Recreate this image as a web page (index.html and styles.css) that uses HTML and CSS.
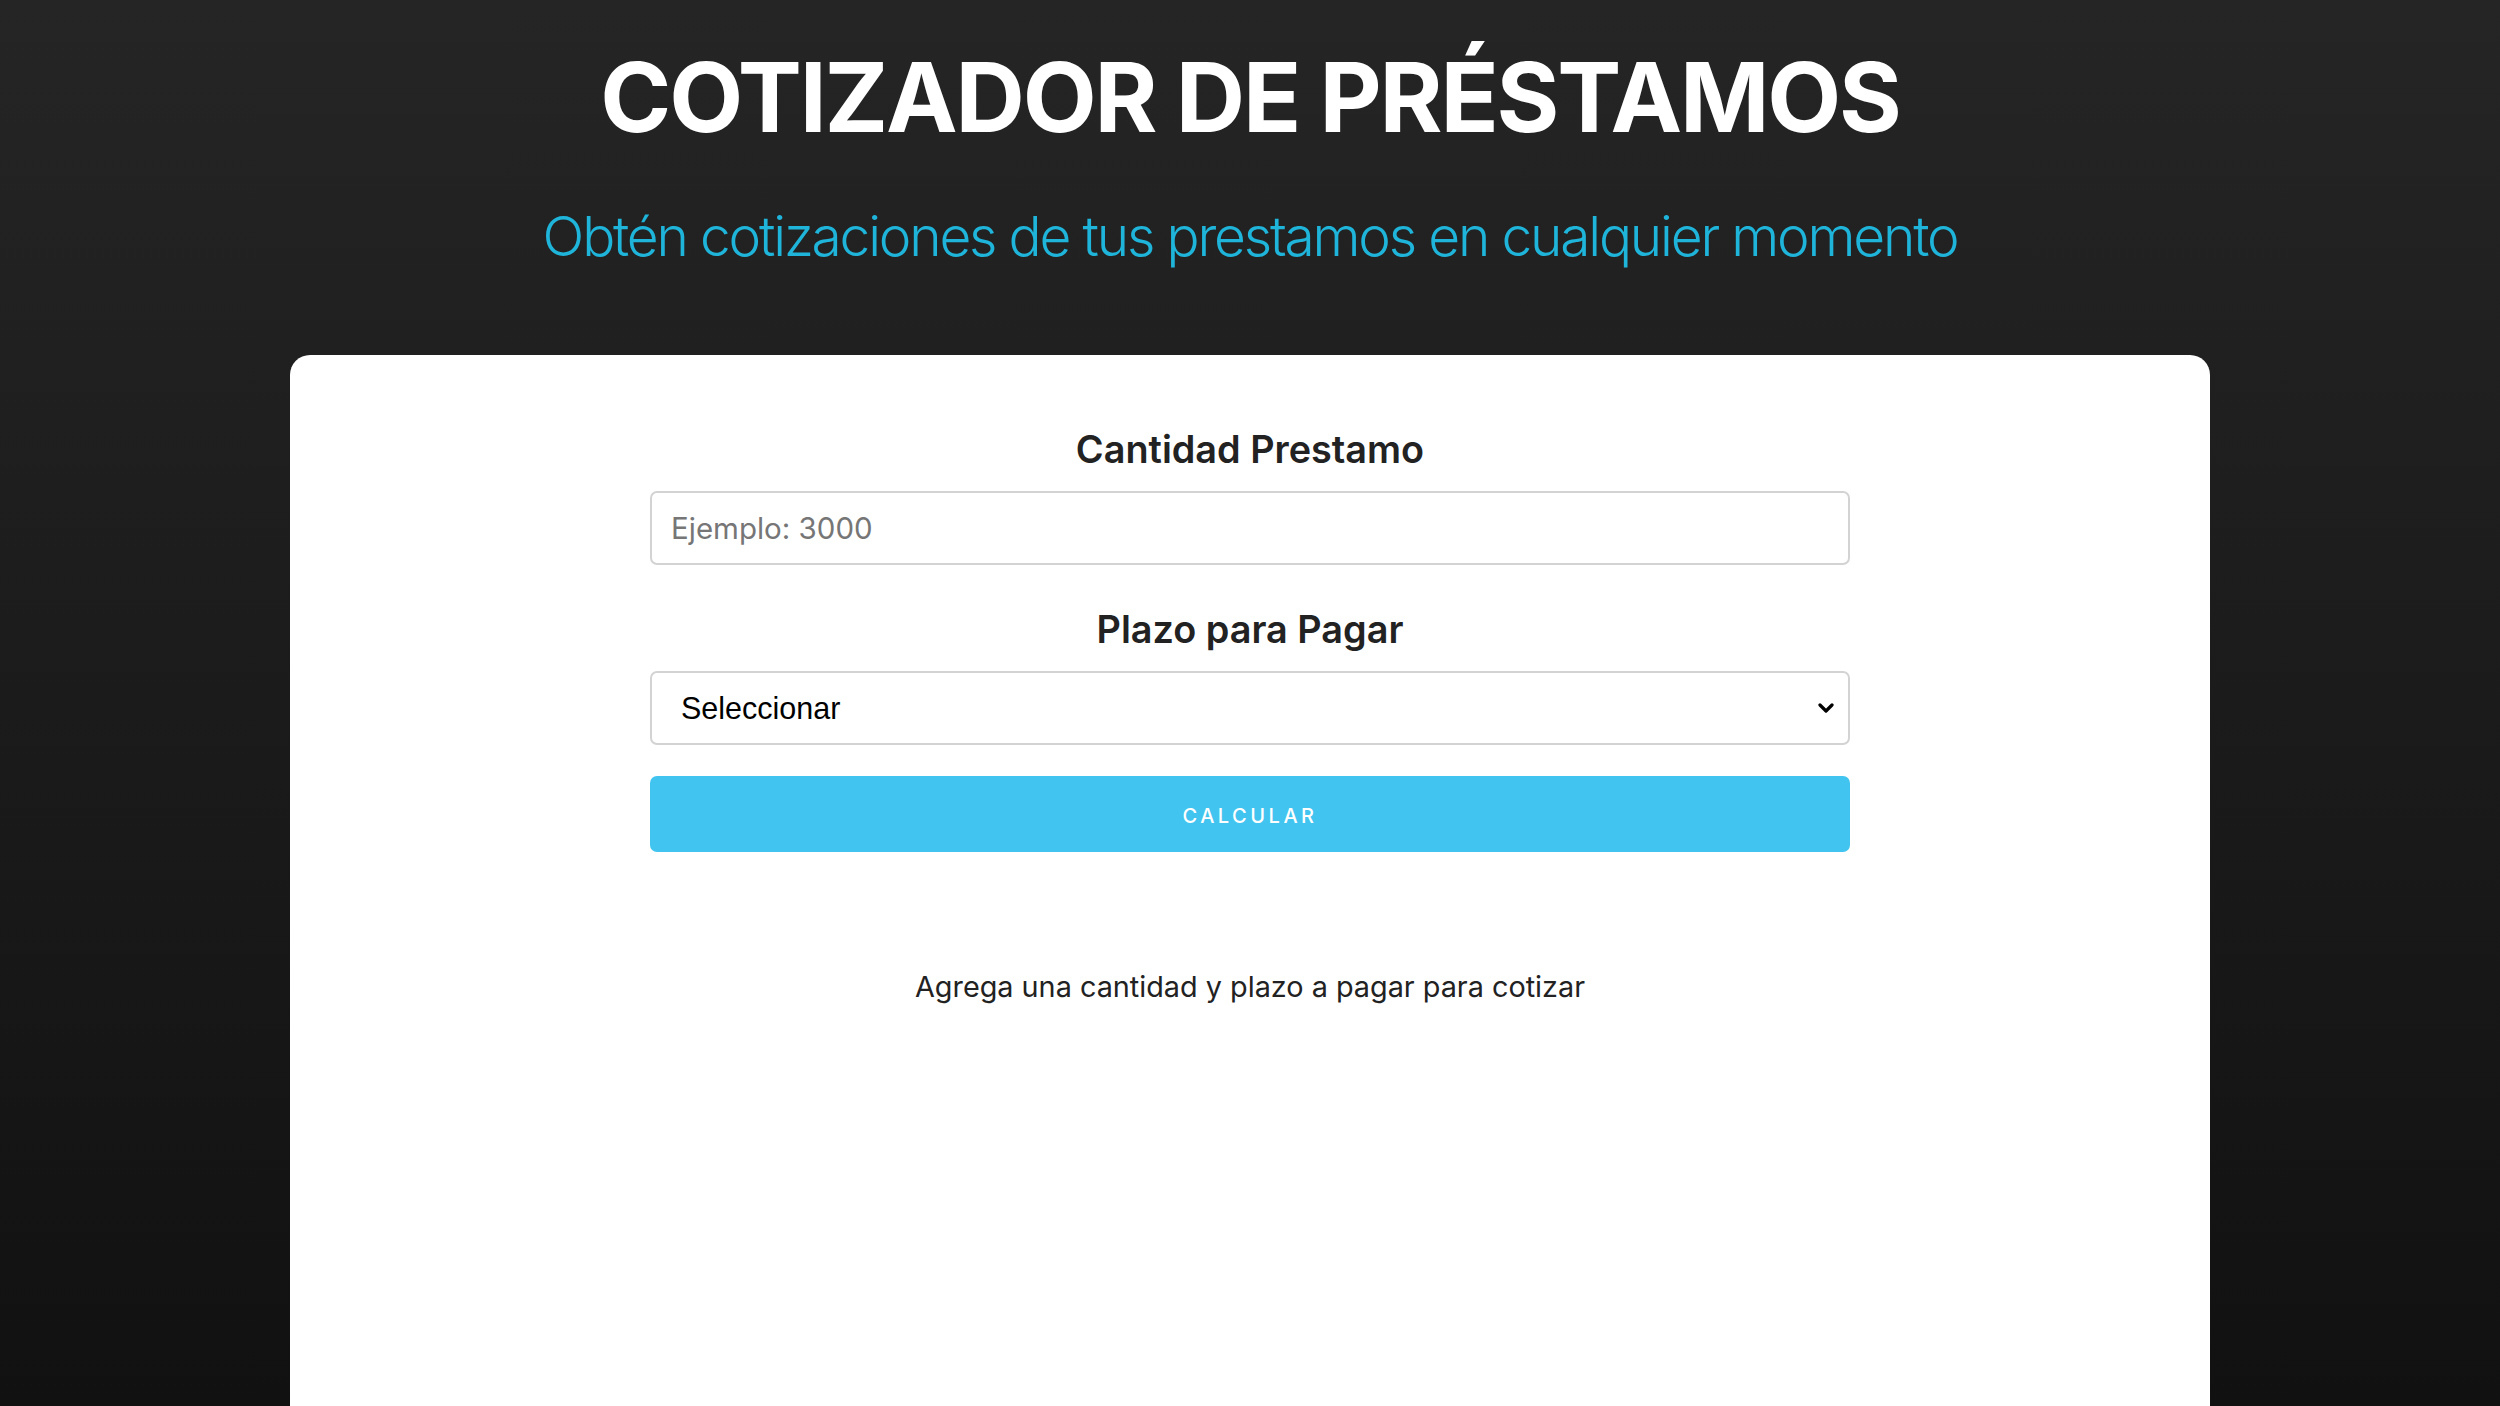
FILE: index.html
```html
<!DOCTYPE html>
<html lang="es">
<head>
<meta charset="utf-8">
<title>Cotizador de Préstamos</title>
<link rel="stylesheet" href="styles.css">
</head>
<body>
<header class="header">
  <h1 class="title">COTIZADOR DE PRÉSTAMOS</h1>
  <p class="subtitle">Obtén cotizaciones de tus prestamos en cualquier momento</p>
</header>
<main class="card">
  <form class="form">
    <label class="label" for="cantidad">Cantidad Prestamo</label>
    <input class="field" id="cantidad" type="number" placeholder="Ejemplo: 3000">
    <label class="label label-second" for="plazo">Plazo para Pagar</label>
    <div class="select-wrap">
      <select class="field select" id="plazo">
        <option>Seleccionar</option>
        <option>3 meses</option>
        <option>6 meses</option>
        <option>12 meses</option>
        <option>24 meses</option>
      </select>
      <svg class="chevron" width="16" height="10" viewBox="0 0 16 10"><path d="M2 2 L8 8 L14 2" fill="none" stroke="#000" stroke-width="3.2" stroke-linecap="round" stroke-linejoin="round"/></svg>
    </div>
    <button class="button" type="button">Calcular</button>
  </form>
  <p class="message">Agrega una cantidad y plazo a pagar para cotizar</p>
</main>
</body>
</html>
```

FILE: styles.css
```css
* { box-sizing: border-box; }
html, body { height: 100%; }
body {
  margin: 0;
  height: 1406px;
  overflow: hidden;
  background: linear-gradient(to bottom, #252525 0%, #111111 100%);
  font-family: Inter, "Noto Sans", sans-serif;
  display: flex;
  flex-direction: column;
  align-items: center;
}
.header {
  text-align: center;
  padding-top: 49px;
}
.title {
  margin: 0;
  color: #ffffff;
  font-size: 96px;
  font-weight: 700;
  line-height: 1;
  letter-spacing: -2.2px;
}
.subtitle {
  margin: 64px 0 0;
  color: #1fb4da;
  font-size: 55px;
  font-weight: 300;
  line-height: 1;
  letter-spacing: -2.18px;
}
.card {
  margin-top: 91px;
  width: 1920px;
  flex: 1;
  background: #ffffff;
  border-radius: 20px 20px 0 0;
  padding-top: 72px;
  display: flex;
  flex-direction: column;
  align-items: center;
}
.form {
  width: 1200px;
  display: flex;
  flex-direction: column;
}
.label {
  text-align: center;
  font-size: 37.8px;
  font-weight: 600;
  color: #222222;
  line-height: 44px;
  margin-bottom: 20px;
}
.label-second { margin-top: 42px; }
.field {
  width: 100%;
  height: 74px;
  border: 2px solid #d3d3d3;
  border-radius: 7px;
  background: #ffffff;
  font-family: Inter, "Noto Sans", sans-serif;
  font-size: 29.5px;
  color: #111111;
  padding: 0 19px;
  outline: none;
}
.field::placeholder { color: #767676; }
.select-wrap { position: relative; }
.select {
  appearance: none;
  -webkit-appearance: none;
  font-family: "Liberation Sans", Arial, sans-serif;
  font-size: 30.5px;
  color: #000000;
  padding-left: 29px;
}
.chevron {
  position: absolute;
  right: 16px;
  top: 32px;
  pointer-events: none;
}
.button {
  margin-top: 31px;
  height: 76px;
  padding-top: 4px;
  border: none;
  border-radius: 7px;
  background: #41c4ef;
  color: #ffffff;
  font-family: Inter, "Noto Sans", sans-serif;
  font-size: 20px;
  font-weight: 500;
  letter-spacing: 3.5px;
  text-transform: uppercase;
}
.message {
  margin: 121px 0 0;
  font-size: 28.8px;
  color: #222222;
  line-height: 1;
}
```
